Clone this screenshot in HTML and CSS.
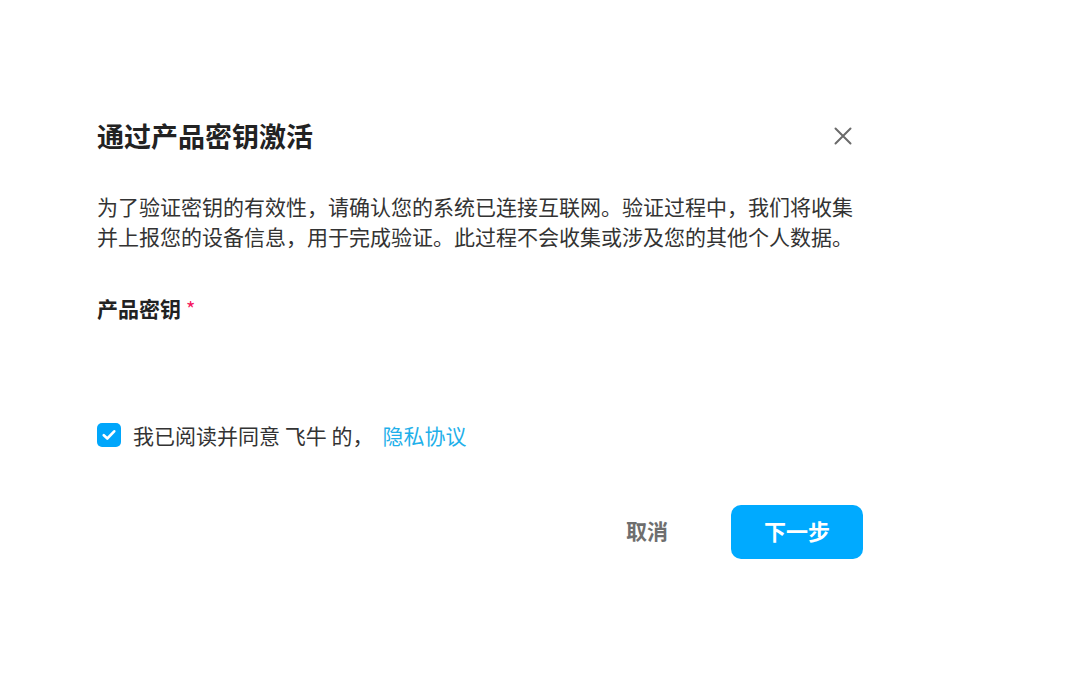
FILE: index.html
```html
<!DOCTYPE html>
<html lang="zh-CN">
<head>
<meta charset="utf-8">
<title>通过产品密钥激活</title>
<link rel="stylesheet" href="styles.css">
</head>
<body>
<div class="dialog">
  <div class="header">
    <h1 class="title">通过产品密钥激活</h1>
    <button class="close" aria-label="关闭">
      <svg width="18" height="18" viewBox="0 0 18 18"><path d="M1.5 1.5 L16.5 16.5 M16.5 1.5 L1.5 16.5" stroke="#6b6b6b" stroke-width="2" stroke-linecap="round" fill="none"/></svg>
    </button>
  </div>
  <p class="desc">为了验证密钥的有效性，请确认您的系统已连接互联网。验证过程中，我们将收集并上报您的设备信息，用于完成验证。此过程不会收集或涉及您的其他个人数据。</p>
  <div class="field">
    <span class="label">产品密钥</span><span class="req">*</span>
  </div>
  <label class="agree">
    <span class="check">
      <svg width="14" height="12" viewBox="0 0 14 12"><path d="M1.8 6.2 L5.3 9.5 L12.2 2.3" stroke="#fff" stroke-width="2.6" stroke-linecap="round" stroke-linejoin="round" fill="none"/></svg>
    </span>
    <span class="agree-text">我已阅读并同意 飞牛 的，</span><a class="link" href="#">隐私协议</a>
  </label>
  <div class="actions">
    <button class="btn-cancel">取消</button>
    <button class="btn-next">下一步</button>
  </div>
</div>
</body>
</html>
```
FILE: styles.css
```css
html, body {
  margin: 0;
  padding: 0;
  background: #fff;
}
body {
  font-family: "Noto Sans CJK SC", "Noto Sans", sans-serif;
  color: #2b2b2b;
}
.dialog {
  width: 766px;
  margin-left: 97px;
  padding-top: 117px;
}
.header {
  display: flex;
  align-items: center;
  justify-content: space-between;
  height: 38px;
}
.title {
  margin: 0;
  font-size: 27px;
  font-weight: 700;
  line-height: 38px;
  color: #222;
}
.close {
  width: 40px;
  height: 38px;
  border: 0;
  background: transparent;
  padding: 0;
  display: flex;
  align-items: center;
  justify-content: center;
  cursor: pointer;
}
.desc {
  margin: 36px 0 0 0;
  font-size: 21px;
  line-height: 30px;
  color: #333;
}
.field {
  margin-top: 42px;
  line-height: 30px;
  display: flex;
  align-items: center;
}
.label {
  font-size: 21px;
  font-weight: 700;
  color: #222;
}
.req {
  color: #f5155d;
  font-size: 20px;
  margin-left: 5px;
  position: relative;
  top: 1px;
}
.agree {
  margin-top: 97px;
  display: flex;
  align-items: center;
  height: 30px;
  font-size: 21px;
  color: #333;
}
.check {
  width: 24px;
  height: 24px;
  border-radius: 5px;
  background: #00a6fb;
  display: flex;
  align-items: center;
  justify-content: center;
  margin-right: 12px;
}
.agree-text {
  white-space: pre;
}
.link {
  margin-left: 9px;
  color: #1fb0ea;
  text-decoration: none;
}
.actions {
  margin-top: 55px;
  display: flex;
  justify-content: flex-end;
  align-items: center;
}
.btn-cancel {
  width: 100px;
  height: 54px;
  border: 0;
  padding: 0 0 4px 0;
  background: transparent;
  font-family: inherit;
  font-size: 21px;
  font-weight: 700;
  color: #6e6e6e;
  margin-right: 34px;
  cursor: pointer;
}
.btn-next {
  width: 132px;
  height: 54px;
  border: 0;
  padding: 0 0 4px 0;
  border-radius: 10px;
  background: #00aaff;
  color: #fff;
  font-family: inherit;
  font-size: 22px;
  font-weight: 700;
  cursor: pointer;
}
```
